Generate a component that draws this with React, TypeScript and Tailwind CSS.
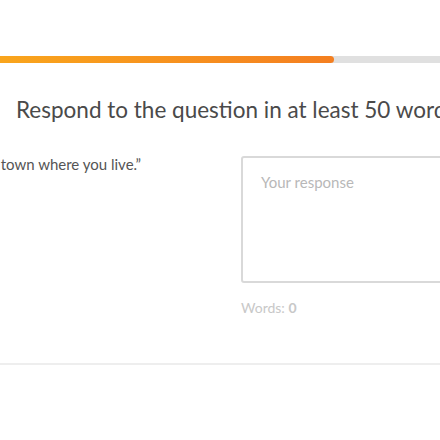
export default function App() {
  const progress = 334;

  return (
    <div className="w-[440px] h-[440px] overflow-hidden bg-white font-['Lato','Liberation_Sans',sans-serif]">
      {/* Progress */}
      <div className="pt-[56px]">
        <div className="h-[7px] w-full bg-[#e0e0e0]">
          <div
            className="h-full rounded-r-full bg-gradient-to-r from-[#f9a51c] to-[#f47f20]"
            style={{ width: `${progress}px` }}
          />
        </div>
      </div>

      {/* Heading */}
      <h1 className="mt-[33px] pl-[16px] whitespace-nowrap text-[22.5px] leading-[28px] text-[#4a4a4a]">
        Respond to the question in at least 50 words
      </h1>

      {/* Body */}
      <div className="mt-[30px] flex">
        <div className="w-[241px] shrink-0 flex justify-end pr-[100px] overflow-hidden">
          <p className="whitespace-nowrap text-[15px] leading-[20px] text-[#555]">
            “Describe the town where you live.”
          </p>
        </div>
        <div className="flex-1 min-w-[220px] pt-[2px]">
          <div className="h-[127px] w-[230px] rounded-[3px] border-2 border-[#d9d9d9] px-[18px] pt-[12px]">
            <span className="text-[15px] leading-[20px] text-[#b8b8b8]">Your response</span>
          </div>
          <div className="mt-[15px] text-[14px] leading-[20px] text-[#c8c8c8]">
            Words: <span className="font-bold">0</span>
          </div>
        </div>
      </div>

      {/* Divider */}
      <div className="mt-[45px] h-[2px] w-full bg-[#eeeeee]" />
    </div>
  );
}
